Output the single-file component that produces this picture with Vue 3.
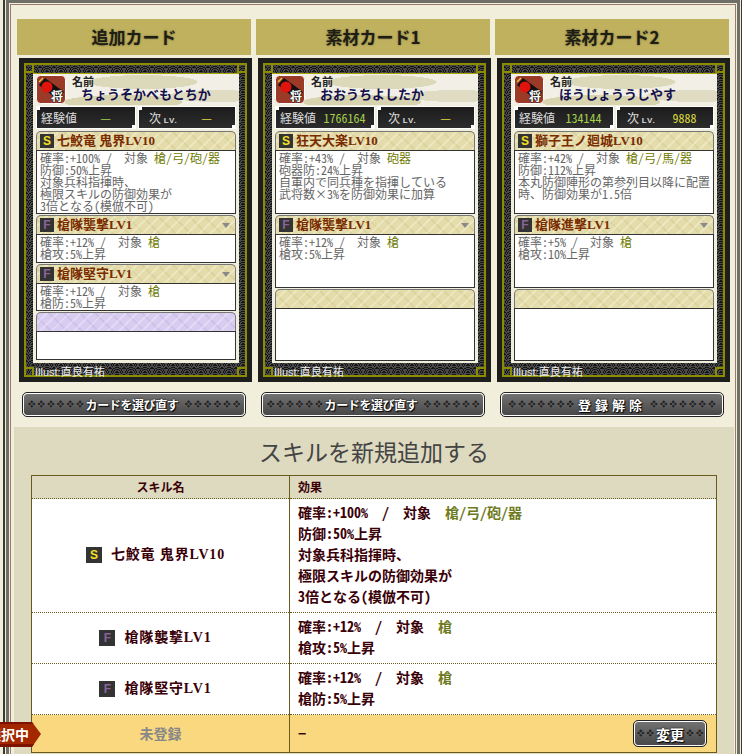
<template>
  <div class="page">
    <div class="frame-a">
      <div class="frame-b">
        <div class="frame-c">
          <div class="columns">
            <div v-for="card in cards" :key="card.title" class="column">
              <h2 class="col-title">{{ card.title }}</h2>
              <div class="card">
                <div class="card-olive">
                  <span class="corner tl"></span>
                  <span class="corner tr"></span>
                  <span class="corner bl"></span>
                  <span class="corner br"></span>
                  <div class="card-inner">
                    <div class="name-box">
                      <svg class="general-icon" width="30" height="29" viewBox="0 0 30 29">
                        <rect x="0.5" y="0.5" width="29" height="28" rx="4" fill="#9c3a28" stroke="#fff" />
                        <path d="M3 10 L9 3 L28 17 L22 25 Z" fill="#111" />
                        <circle cx="11" cy="12" r="5.5" fill="#e0140c" />
                        <path d="M3 7 L7 3" stroke="#e8c040" stroke-width="1.5" />
                        <text x="15" y="26" class="icon-text">将</text>
                      </svg>
                      <div class="name-text">
                        <div class="name-label">名前</div>
                        <div class="name-value">{{ card.name }}</div>
                      </div>
                    </div>
                    <div class="stats">
                      <div class="stat stat-exp">
                        <span class="stat-label">経験値</span>
                        <span class="stat-val exp">{{ card.exp }}</span>
                      </div>
                      <div class="stat stat-next">
                        <span class="stat-label">次 <small>LV.</small></span>
                        <span class="stat-val next">{{ card.next }}</span>
                      </div>
                    </div>
                    <div v-for="(skill, i) in card.skills" :key="i" class="skill">
                      <div class="skill-title" :class="{ purple: skill.purple }">
                        <span v-if="skill.rank" class="rank" :class="skill.rank">{{ skill.rank }}</span>
                        <span class="skill-name">{{ skill.name }}</span>
                        <span v-if="skill.rank === 'F'" class="arrow"></span>
                      </div>
                      <div class="skill-body" :style="{ height: skill.h + 'px' }">
                        <div v-if="skill.rate" class="line">{{ '確率:' + skill.rate + ' /  対象 ' }}<span class="target">{{ skill.target }}</span></div>
                        <div v-for="line in skill.lines" :key="line" class="line">{{ line }}</div>
                      </div>
                    </div>
                  </div>
                  <div class="illust">Illust:直良有祐</div>
                </div>
              </div>
              <button class="btn btn-wide" :class="{ spaced: card.button.length < 5 }">
                <span class="dia">{{ card.dia }}</span>
                <span class="btn-label">{{ card.button }}</span>
                <span class="dia">{{ card.dia }}</span>
              </button>
            </div>
          </div>

          <div class="panel">
            <h3 class="panel-title">スキルを新規追加する</h3>
            <table class="skill-table">
              <thead>
                <tr>
                  <th class="c-name">スキル名</th>
                  <th class="c-effect">効果</th>
                </tr>
              </thead>
              <tbody>
                <tr v-for="row in rows" :key="row.name" :style="{ height: row.h + 'px' }">
                  <td class="c-name lifted">
                    <span class="t-rank" :class="row.rank">{{ row.rank }}</span>
                    <span class="t-name">{{ row.name }}</span>
                  </td>
                  <td class="c-effect lifted">
                    <div>{{ '確率:' + row.rate + '  /  対象  ' }}<span class="t-target">{{ row.target }}</span></div>
                    <div v-for="line in row.lines" :key="line">{{ line }}</div>
                  </td>
                </tr>
                <tr class="empty-row">
                  <td class="c-name unset">未登録</td>
                  <td class="c-effect">
                    <div class="empty-cell">
                      <span>−</span>
                      <button class="btn btn-small">
                        <span class="dia">❖❖</span><span class="btn-label">変更</span><span class="dia">❖❖</span>
                      </button>
                    </div>
                  </td>
                </tr>
              </tbody>
            </table>
          </div>
        </div>
      </div>
    </div>
    <div class="selected-badge"><span>選択中</span></div>
  </div>
</template>

<script setup>
const cards = [
  {
    title: '追加カード',
    name: 'ちょうそかべもとちか',
    exp: '—',
    next: '—',
    button: 'カードを選び直す',
    dia: '❖❖❖❖❖❖',
    skills: [
      {
        rank: 'S',
        name: '七鮫竜 鬼界LV10',
        rate: '+100%',
        target: '槍/弓/砲/器',
        lines: ['防御:50%上昇', '対象兵科指揮時、', '極限スキルの防御効果が', '3倍となる(模倣不可)'],
        h: 64,
      },
      { rank: 'F', name: '槍隊襲撃LV1', rate: '+12%', target: '槍', lines: ['槍攻:5%上昇'], h: 29 },
      { rank: 'F', name: '槍隊堅守LV1', rate: '+12%', target: '槍', lines: ['槍防:5%上昇'], h: 28 },
      { purple: true, h: 29 },
    ],
  },
  {
    title: '素材カード1',
    name: 'おおうちよしたか',
    exp: '1766164',
    next: '—',
    button: 'カードを選び直す',
    dia: '❖❖❖❖❖❖',
    skills: [
      {
        rank: 'S',
        name: '狂天大楽LV10',
        rate: '+43%',
        target: '砲器',
        lines: ['砲器防:24%上昇', '自軍内で同兵種を指揮している', '武将数×3%を防御効果に加算'],
        h: 64,
      },
      { rank: 'F', name: '槍隊襲撃LV1', rate: '+12%', target: '槍', lines: ['槍攻:5%上昇'], h: 54 },
      { h: 53 },
    ],
  },
  {
    title: '素材カード2',
    name: 'ほうじょううじやす',
    exp: '134144',
    next: '9888',
    button: '登録解除',
    dia: '❖❖❖❖❖❖❖',
    skills: [
      {
        rank: 'S',
        name: '獅子王ノ廻城LV10',
        rate: '+42%',
        target: '槍/弓/馬/器',
        lines: ['防御:112%上昇', '本丸防御陣形の第参列目以降に配置', '時、防御効果が1.5倍'],
        h: 64,
      },
      { rank: 'F', name: '槍隊進撃LV1', rate: '+5%', target: '槍', lines: ['槍攻:10%上昇'], h: 54 },
      { h: 53 },
    ],
  },
]

const rows = [
  {
    rank: 'S',
    name: '七鮫竜 鬼界LV10',
    rate: '+100%',
    target: '槍/弓/砲/器',
    lines: ['防御:50%上昇', '対象兵科指揮時、', '極限スキルの防御効果が', '3倍となる(模倣不可)'],
    h: 114,
  },
  { rank: 'F', name: '槍隊襲撃LV1', rate: '+12%', target: '槍', lines: ['槍攻:5%上昇'], h: 51 },
  { rank: 'F', name: '槍隊堅守LV1', rate: '+12%', target: '槍', lines: ['槍防:5%上昇'], h: 51 },
]
</script>

<style>
html,
body {
  margin: 0;
  background: #f1efdc;
}
</style>

<style scoped>
.page {
  position: relative;
  width: 742px;
  height: 754px;
  overflow: hidden;
  box-sizing: border-box;
  padding-left: 3px;
  background: #f1efdc;
  font-family: "Liberation Serif", "Noto Sans CJK JP", serif;
}

.frame-a {
  box-sizing: border-box;
  width: 739px;
  height: 754px;
  border-left: 2px solid #3a3a34;
  border-right: 1px solid #3a3a34;
  padding: 0 1px;
}

.frame-b {
  box-sizing: border-box;
  height: 100%;
  border: 3px solid #6f6f67;
  border-bottom: 0;
  padding: 1px 1px 0;
}

.frame-c {
  box-sizing: border-box;
  height: 100%;
  border: 1px solid #9a7a6e;
  border-bottom: 0;
  padding: 14px 0 0 3px;
}

.columns {
  display: flex;
  gap: 5px;
  margin-left: 3px;
}

.column {
  width: 234px;
}

.col-title {
  margin: 0;
  height: 36px;
  background: #c0b15f;
  color: #1e1e14;
  font: bold 17px/36px "Noto Sans CJK JP", sans-serif;
  text-align: center;
  text-shadow: 0 0 2px #6a6030;
}

.card {
  box-sizing: border-box;
  width: 233px;
  height: 324px;
  margin: 3px 0 0 2px;
  border: 5px solid #1e1e1c;
}

.card-olive {
  position: relative;
  box-sizing: border-box;
  height: 100%;
  border: 2px solid #8c8c00;
  padding: 8px 6px 0 7px;
  background-color: #141414;
  background-image:
    radial-gradient(circle at 50% 100%, #141414 0 2px, #4a4a4a 2px 3px, #141414 3px 4px, #4a4a4a 4px 5px, #141414 5px 6px, #4a4a4a 6px 7px, transparent 7px),
    radial-gradient(circle at 50% 100%, #141414 0 2px, #4a4a4a 2px 3px, #141414 3px 4px, #4a4a4a 4px 5px, #141414 5px 6px, #4a4a4a 6px 7px, transparent 7px);
  background-size: 14px 7px;
  background-position: 0 0, 7px 3px;
}

.corner {
  position: absolute;
  width: 6px;
  height: 6px;
  border: 2px solid #8c8c00;
}

.corner.tl {
  left: -2px;
  top: -2px;
}

.corner.tr {
  right: -2px;
  top: -2px;
}

.corner.bl {
  left: -2px;
  bottom: -2px;
}

.corner.br {
  right: -2px;
  bottom: -2px;
}

.card-inner {
  box-sizing: border-box;
  height: 290px;
  padding: 0 3px;
  background: #f0eedd;
  border-top: 1px solid #a8a800;
}

.name-box {
  display: flex;
  height: 31px;
  margin: 0 -3px;
  padding: 1px 0 0 3px;
  box-sizing: border-box;
  background:
    radial-gradient(ellipse 55px 7px at 110px 8px, #dcd8ba 98%, transparent),
    radial-gradient(ellipse 60px 7px at 90px 28px, #d8d4b0 98%, transparent),
    radial-gradient(ellipse 50px 6px at 185px 22px, #e0dcc4 98%, transparent),
    #f2f0e6;
}

.general-icon {
  flex: none;
}

.icon-text {
  font: bold 12px "Noto Sans CJK JP", sans-serif;
  fill: #fff;
  stroke: #1a1a1a;
  stroke-width: 1px;
  paint-order: stroke;
}

.name-text {
  margin-left: 6px;
  min-width: 0;
}

.name-label {
  height: 11px;
  font: bold 11px/12px "Noto Sans CJK JP", sans-serif;
  color: #222;
}

.name-value {
  margin-left: 9px;
  height: 16px;
  font: bold 13px/16px "Noto Sans CJK JP", sans-serif;
  color: #14104e;
  white-space: nowrap;
}

.stats {
  display: flex;
  gap: 2px;
  margin-top: 1px;
}

.stat {
  position: relative;
  box-sizing: border-box;
  display: flex;
  height: 23px;
  background: linear-gradient(#1c1c1c, #2c2c2c);
  border: 1px solid #fff;
  color: #ddd;
  font: 12px/21px "Noto Sans CJK JP", sans-serif;
}

.stat::before,
.stat::after {
  content: "";
  position: absolute;
  width: 4px;
  height: 4px;
  background: #fff;
}

.stat::before {
  left: -1px;
  top: -1px;
}

.stat::after {
  right: -1px;
  bottom: -1px;
}

.stat-exp {
  width: 100px;
}

.stat-next {
  width: 98px;
}

.stat-label {
  box-sizing: border-box;
  width: 39px;
  padding-left: 4px;
  white-space: nowrap;
}

.stat-next .stat-label {
  padding-left: 10px;
}

.stat small {
  font: bold 8px "Liberation Sans", sans-serif;
  letter-spacing: 1px;
}

.stat-val {
  flex: 1;
  text-align: center;
  font: 12px/21px "Noto Sans Mono CJK JP", "Liberation Sans", sans-serif;
}

.stat-val.exp {
  color: #a6d04c;
}

.stat-val.next {
  color: #dcdc3c;
}

.skill {
  margin-bottom: 1px;
}

.stats + .skill {
  margin-top: 2px;
}

.skill-title {
  box-sizing: border-box;
  display: flex;
  align-items: center;
  height: 19px;
  padding: 0 3px;
  border: 1px solid #777;
  border-bottom: 0;
  border-radius: 5px 5px 0 0;
  background:
    repeating-linear-gradient(135deg, transparent 0 6px, rgba(255, 255, 240, 0.3) 6px 8px),
    repeating-linear-gradient(45deg, transparent 0 9px, rgba(190, 175, 110, 0.2) 9px 11px),
    #e4dcaa;
}

.skill-title.purple {
  background:
    repeating-linear-gradient(135deg, transparent 0 6px, rgba(250, 245, 255, 0.3) 6px 8px),
    repeating-linear-gradient(45deg, transparent 0 9px, rgba(170, 150, 210, 0.2) 9px 11px),
    #d8cdf0;
}

.rank {
  width: 14px;
  height: 14px;
  margin-right: 3px;
  background: #333;
  font: bold 12px/14px "Liberation Sans", sans-serif;
  text-align: center;
}

.rank.S,
.t-rank.S {
  color: #f4e020;
}

.rank.F,
.t-rank.F {
  color: #8a6498;
}

.skill-name {
  flex: 1;
  color: #7a2c00;
  font: bold 13px/16px "Liberation Serif", "Noto Sans CJK JP", serif;
  white-space: nowrap;
}

.arrow {
  width: 0;
  height: 0;
  margin-right: 2px;
  border: 4px solid transparent;
  border-top: 5px solid #8a8a8a;
  border-bottom: 0;
}

.skill-body {
  box-sizing: border-box;
  padding: 1px 3px 0;
  background: #fff;
  border: 1px solid #333;
  color: #666;
  font: 12px/12px "Noto Sans Mono CJK JP", "Noto Sans CJK JP", sans-serif;
  white-space: pre;
  overflow: hidden;
}

.line {
  height: 12px;
}

.target {
  color: #6e7a00;
}

.illust {
  margin: 3px 0 0 2px;
  color: #eee;
  font: 11px/12px "Liberation Sans", "Noto Sans CJK JP", sans-serif;
}

.btn {
  display: flex;
  align-items: center;
  justify-content: center;
  box-sizing: border-box;
  padding: 0;
  background: linear-gradient(#727272, #5a5a5a 55%, #484848);
  border: 1px solid #fff;
  border-radius: 4px;
  outline: 1px solid #222;
  color: #fff;
  cursor: pointer;
  white-space: nowrap;
}

.btn-wide {
  width: 222px;
  height: 23px;
  margin: 11px 0 0 6px;
}

.btn-small {
  width: 72px;
  height: 25px;
}

.btn-label {
  padding: 0 1px;
  font: bold 12px/20px "Noto Sans CJK JP", sans-serif;
  text-shadow: 0 0 2px #000, 1px 1px 1px #000;
}

.btn-wide .btn-label {
  margin-right: 4px;
  letter-spacing: -0.4px;
}

.btn-wide.spaced .btn-label {
  margin-right: 0;
  padding: 0 3px;
  font-size: 13px;
  letter-spacing: 4px;
}

.btn-small .btn-label {
  font-size: 14px;
}

.dia {
  color: #262626;
  font: 11px/20px "DejaVu Sans", sans-serif;
  text-shadow: 0 0 1px #999;
  letter-spacing: -0.2px;
}

.panel {
  box-sizing: border-box;
  height: 330px;
  margin-top: 11px;
  padding: 10px 0 0 17px;
  background: #dedac0;
  width: 720px;
}

.panel-title {
  margin: 0;
  width: 686px;
  color: #444;
  font: 400 23px/28px "Noto Sans CJK JP", sans-serif;
  text-align: center;
}

.skill-table {
  width: 686px;
  margin-top: 10px;
  border-collapse: collapse;
  table-layout: fixed;
  background: #fff;
  border: 1px solid #6b5a1e;
  color: #3a0008;
  font: bold 14px/21px "Noto Sans Mono CJK JP", "Noto Sans CJK JP", sans-serif;
}

.skill-table th {
  height: 22px;
  padding: 0;
  background: #dedac0;
  border-bottom: 1px dotted #6b5a1e;
  font: bold 12px/22px "Noto Sans CJK JP", sans-serif;
}

.skill-table td {
  padding: 0;
  border-bottom: 1px dotted #6b5a1e;
}

.c-name {
  width: 257px;
  text-align: center;
  border-right: 1px solid #6b5a1e;
}

th.c-effect,
td.c-effect {
  padding-left: 8px;
  text-align: left;
  white-space: pre;
}

.skill-table td.lifted {
  padding-bottom: 3px;
}

.t-rank {
  display: inline-block;
  width: 16px;
  height: 16px;
  margin-right: 9px;
  background: #333;
  font: bold 12px/16px "Liberation Sans", sans-serif;
  vertical-align: 0;
}

.t-name {
  margin-right: 10px;
  font-family: "Liberation Serif", "Noto Sans CJK JP", serif;
  letter-spacing: 0.85px;
}

.t-target {
  color: #6e7a20;
}

.empty-row {
  height: 38px;
  background: #fad880;
}

.unset {
  color: #888;
}

.empty-cell {
  display: flex;
  justify-content: space-between;
  align-items: center;
  padding-right: 10px;
}

.selected-badge {
  position: absolute;
  left: 0;
  top: 722px;
  width: 41px;
  height: 25px;
  overflow: hidden;
  clip-path: polygon(0 0, 32px 0, 41px 12px, 32px 25px, 0 25px);
  background: #a32800;
  box-shadow: inset 0 2px 0 #7e1200, inset 0 -3px 0 #7e1200;
  color: #fff;
  font: bold 14px/24px "Noto Sans CJK JP", sans-serif;
  white-space: nowrap;
}

.selected-badge span {
  display: block;
  margin-left: -13px;
}
</style>
